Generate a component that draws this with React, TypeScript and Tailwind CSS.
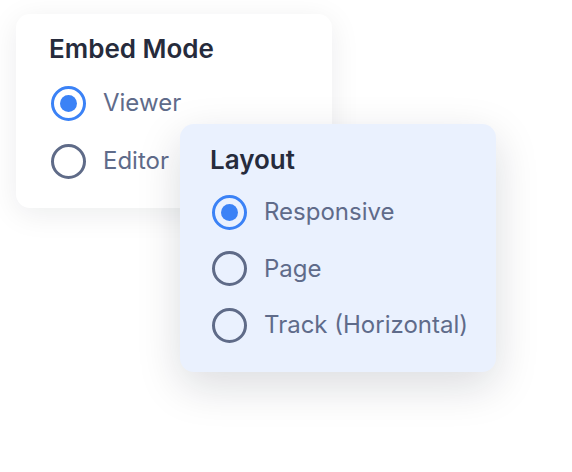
const font = { fontFamily: "Inter, 'Noto Sans', sans-serif" };

type Option = { label: string; checked?: boolean };

function Radio({ checked }: { checked?: boolean }) {
  return (
    <span
      className={
        "flex h-[35px] w-[35px] shrink-0 items-center justify-center rounded-full border-[3px] " +
        (checked ? "border-[#3b82f6]" : "border-[#5f6b88]")
      }
    >
      {checked && <span className="h-[17px] w-[17px] rounded-full bg-[#3b82f6]" />}
    </span>
  );
}

function OptionRow({ label, checked, h }: Option & { h: string }) {
  return (
    <div className={"flex items-center gap-[17px] whitespace-nowrap " + h}>
      <Radio checked={checked} />
      <span className="text-[24px] leading-none text-[#5f6b8a]">{label}</span>
    </div>
  );
}

export default function App() {
  const embed: Option[] = [{ label: "Viewer", checked: true }, { label: "Editor" }];
  const layout: Option[] = [
    { label: "Responsive", checked: true },
    { label: "Page" },
    { label: "Track (Horizontal)" },
  ];
  return (
    <div className="h-[472px] w-[572px] overflow-hidden bg-white" style={font}>
      <div className="ml-4 mt-[14px] h-[194px] w-[316px] rounded-[14px] bg-white px-[35px] pt-[19px] shadow-[0_6px_30px_rgba(15,23,42,0.08)]">
        <h2 className="-ml-[2px] h-[32px] text-[26px] font-semibold leading-[32px] text-[#262b3c]">Embed Mode</h2>
        <div className="mt-[9px]">
          {embed.map((o) => (
            <OptionRow key={o.label} {...o} h="h-[58px]" />
          ))}
        </div>
      </div>
      <div className="relative z-10 -mt-[84px] ml-[180px] h-[248px] w-[316px] rounded-[14px] bg-[#eaf1fe] px-[32px] pt-[18px] shadow-[0_14px_44px_rgba(15,23,42,0.15)]">
        <h2 className="-ml-[2px] mt-[2px] h-[32px] text-[26px] font-semibold leading-[32px] text-[#262b3c]">Layout</h2>
        <div className="mt-[8px]">
          {layout.map((o) => (
            <OptionRow key={o.label} {...o} h="h-[56.5px]" />
          ))}
        </div>
      </div>
    </div>
  );
}
